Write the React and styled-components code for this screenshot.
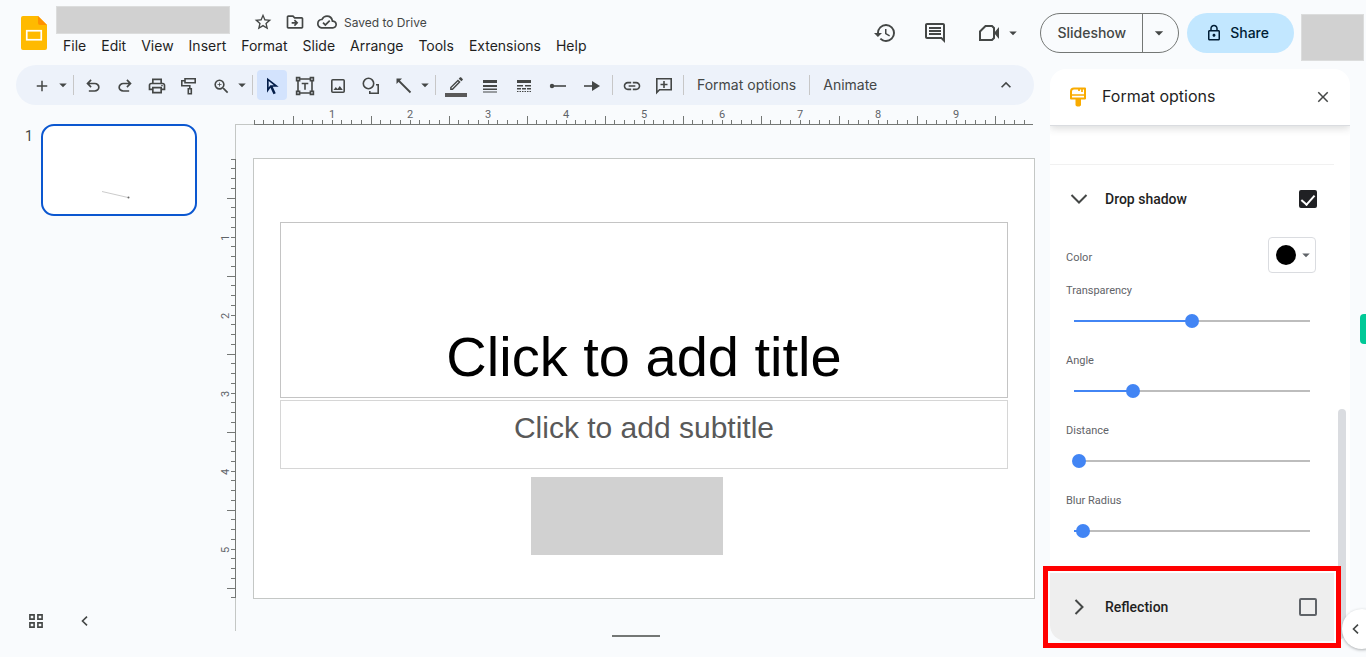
import React, { useState } from 'react';
import styled, { createGlobalStyle, css } from 'styled-components';
import {
  MdAdd,
  MdArrowDropDown,
  MdClose,
  MdHistory,
  MdKeyboardArrowUp,
  MdLink,
  MdOutlineCloudDone,
  MdOutlineDriveFileMove,
  MdOutlineEdit,
  MdOutlineInsertComment,
  MdOutlineLock,
  MdOutlinePrint,
  MdStarBorder,
  MdZoomIn
} from 'react-icons/md';

const INCH = 78;
const STEPS = 8;

const menus = [
  'File',
  'Edit',
  'View',
  'Insert',
  'Format',
  'Slide',
  'Arrange',
  'Tools',
  'Extensions',
  'Help'
];

const shadowSliders = [
  { id: 'transparency', label: 'Transparency', value: 50 },
  { id: 'angle', label: 'Angle', value: 25 },
  { id: 'distance', label: 'Distance', value: 2 },
  { id: 'blur', label: 'Blur Radius', value: 4 }
];

const SlidesLogo = () => (
  <svg width="26" height="34" viewBox="0 0 26 34" aria-hidden="true">
    <path d="M2 0h15l9 9v23a2 2 0 0 1-2 2H2a2 2 0 0 1-2-2V2a2 2 0 0 1 2-2z" fill="#ffba00" />
    <path d="M17 0l9 9h-7a2 2 0 0 1-2-2z" fill="#ff9100" />
    <rect x="5.75" y="14.75" width="14.5" height="9" fill="none" stroke="#fff" strokeWidth="1.7" />
  </svg>
);

const Symbol = ({ d, size = 20 }) => (
  <svg width={size} height={size} viewBox="0 -960 960 960" fill="currentColor" aria-hidden="true">
    <path d={d} />
  </svg>
);

const Drawn = ({ children, size = 20 }) => (
  <svg
    width={size}
    height={size}
    viewBox={`0 0 ${size} ${size}`}
    fill="none"
    stroke="currentColor"
    strokeWidth="1.6"
    aria-hidden="true"
  >
    {children}
  </svg>
);

const UndoIcon = () => (
  <Symbol d="M280-200v-80h284q63 0 109.500-40T720-420q0-60-46.500-100T564-560H312l104 104-56 56-200-200 200-200 56 56-104 104h252q97 0 169.500 63T800-420q0 94-72.500 157T564-200H280Z" />
);

const RedoIcon = () => (
  <Symbol d="M396-200q-97 0-169.500-63T160-420q0-94 72.500-157T396-640h252L544-744l56-56 200 200-200 200-56-56 104-104H396q-63 0-109.500 40T240-420q0 60 46.500 100T396-280h284v80H396Z" />
);

const SelectIcon = () => (
  <Symbol d="m320-410 79-110h170L320-716v306ZM551-80 406-392 240-160v-720l560 440H516l144 309-109 51ZM399-520Z" />
);

const PaintIcon = () => (
  <Drawn>
    <path d="M6 2.800h10.200v4H6zM6 4.800H2.800v5h8v3" />
    <path d="M9.300 12.800h3v5h-3z" />
  </Drawn>
);

const TextBoxIcon = () => (
  <Drawn>
    <path d="M4.500 3h11M4.500 17h11M3 4.500v11M17 4.500v11" />
    <path d="M1.600 1.600h3v3h-3zM15.400 1.600h3v3h-3zM1.600 15.400h3v3h-3zM15.400 15.400h3v3h-3z" />
    <path d="M6.700 7.500h6.600M10 7.500v6.300" />
  </Drawn>
);

const ImageIcon = () => (
  <Drawn>
    <rect x="3.800" y="3.800" width="12.400" height="12.400" rx="1" />
    <path d="M5.500 14l2.300-3 1.700 2 2.300-3 3 4z" fill="currentColor" stroke="none" />
  </Drawn>
);

const ShapeIcon = () => (
  <Drawn>
    <circle cx="7.500" cy="7.500" r="5.200" />
    <path d="M15 8.800h2.200v8.400H8.800V15" />
  </Drawn>
);

const LineIcon = () => (
  <Drawn>
    <path d="M4 4l12.500 12.500" strokeWidth="1.800" />
    <path d="M2.500 2.500h5.500l-5.500 5.500z" fill="currentColor" stroke="none" />
  </Drawn>
);

const WeightIcon = () => (
  <Drawn>
    <path
      d="M3 4h14v3H3zM3 9h14v2H3zM3 12.500h14v1.500H3zM3 15.500h14v1H3z"
      fill="currentColor"
      stroke="none"
    />
  </Drawn>
);

const DashIcon = () => (
  <Drawn>
    <path
      d="M3 4h14v3H3zM3 9h6v1.500H3zM11 9h6v1.500h-6zM3 12h4v1.500H3zM8 12h4v1.500H8zM13 12h4v1.500h-4z"
      fill="currentColor"
      stroke="none"
    />
    <path d="M3 15.500h14" strokeWidth="1" strokeDasharray="1.500 1" />
  </Drawn>
);

const LineStartIcon = () => (
  <Drawn>
    <path d="M4 10h14" />
    <circle cx="4" cy="10" r="2.200" fill="currentColor" stroke="none" />
  </Drawn>
);

const LineEndIcon = () => (
  <Drawn>
    <path d="M2 10h9" />
    <path d="M10 5l8 5-8 5z" fill="currentColor" stroke="none" />
  </Drawn>
);

const AddCommentIcon = () => (
  <Drawn>
    <path d="M2.800 2.800h14.400v11H5.500l-2.700 2.700zM10 5v7M6.500 8.500h7" />
  </Drawn>
);

const MeetIcon = () => (
  <Drawn size={24}>
    <path d="M8.500 5H15l2 2v10l-2 2H3v-8.500z" strokeWidth="2" />
    <path d="M17 12l5-6v12z" fill="currentColor" stroke="none" />
  </Drawn>
);

const BrushIcon = () => (
  <svg width="18" height="20" viewBox="0 0 18 20" aria-hidden="true">
    <path d="M5 1.500h11v10H2v-7q0-3 3-3z" fill="none" stroke="#f9ab00" strokeWidth="2" strokeLinejoin="round" />
    <path d="M2 8h14M13 1.500v3.500M10 1.500v2.500" stroke="#f9ab00" strokeWidth="1.700" />
    <path d="M6.500 12h5.500v5.500q0 2-2.750 2t-2.750-2z" fill="#f9ab00" />
  </svg>
);

const GridIcon = () => (
  <Drawn size={14}>
    <path d="M.9.900h4.200v4.200H.9zM8.900.900h4.200v4.200H8.900zM.9 8.900h4.200v4.200H.9zM8.900 8.900h4.200v4.200H8.900z" />
  </Drawn>
);

const ChevronIcon = () => (
  <svg width="7" height="10" viewBox="0 0 7 10" fill="none" stroke="currentColor" strokeWidth="1.600" aria-hidden="true">
    <path d="M6 .700L1.500 5 6 9.300" />
  </svg>
);

const ExpandIcon = ({ open }) => (
  <svg width="18" height="18" viewBox="0 0 18 18" fill="none" stroke="#444746" strokeWidth="2" aria-hidden="true">
    <path d={open ? 'M1.500 5L9 12.500 16.500 5' : 'M5.500 2l7 7-7 7'} />
  </svg>
);

const HorizontalRuler = () => (
  <StHorizontalRuler aria-hidden="true">
    <path d="M0 19.500h18" stroke="#c4c7c5" />
    <path d="M18 19.500h779" stroke="#747775" />
    {Array.from({ length: 10 * STEPS }, (_, i) => {
      const x = Math.floor(18 + i * INCH / STEPS);
      const height = i % STEPS === 4 ? 8 : 4;
      return <rect key={i} x={x} y={19 - height} width="1" height={height} fill="#747775" />;
    })}
    {[1, 2, 3, 4, 5, 6, 7, 8, 9].map(n => (
      <text key={n} x={18 + n * INCH} y="13" textAnchor="middle">
        {n}
      </text>
    ))}
  </StHorizontalRuler>
);

const VerticalRuler = () => (
  <StVerticalRuler aria-hidden="true">
    <path d="M19.500 0v507" stroke="#c4c7c5" />
    <path d="M19.500 35v439" stroke="#747775" />
    {Array.from({ length: 46 }, (_, i) => {
      const y = Math.floor(35 + i * INCH / STEPS);
      const width = i % STEPS === 4 ? 8 : 4;
      return <rect key={i} x={19 - width} y={y} width={width} height="1" fill="#747775" />;
    })}
    {[1, 2, 3, 4, 5].map(n => (
      <text key={n} transform={`translate(13 ${36 + n * INCH}) rotate(-90)`} textAnchor="middle">
        {n}
      </text>
    ))}
  </StVerticalRuler>
);

const Slider = ({ id, label, value: initial }) => {
  const [value, setValue] = useState(initial);
  return (
    <StSliderRow>
      <StFieldLabel htmlFor={id}>{label}</StFieldLabel>
      <StRange
        id={id}
        type="range"
        min="0"
        max="100"
        value={value}
        $value={value}
        onChange={e => setValue(Number(e.target.value))}
      />
    </StSliderRow>
  );
};

const Header = () => (
  <StHeader>
    <StLogo href="#" aria-label="Slides home">
      <SlidesLogo />
    </StLogo>
    <StDocument>
      <StTitleRow>
        <StDocumentName />
        <StTitleButton aria-label="Star">
          <MdStarBorder size={20} />
        </StTitleButton>
        <StTitleButton aria-label="Move">
          <MdOutlineDriveFileMove size={20} />
        </StTitleButton>
        <StTitleButton aria-label="Document status">
          <MdOutlineCloudDone size={20} />
        </StTitleButton>
        <StSaved>Saved to Drive</StSaved>
      </StTitleRow>
      <StMenuBar>
        {menus.map(menu => <StMenu key={menu}>{menu}</StMenu>)}
      </StMenuBar>
    </StDocument>
    <StActions>
      <StHeaderButton aria-label="Version history">
        <MdHistory size={24} />
      </StHeaderButton>
      <StHeaderButton aria-label="Comments">
        <MdOutlineInsertComment size={24} />
      </StHeaderButton>
      <StHeaderButton $wide aria-label="Join a call">
        <MeetIcon />
        <MdArrowDropDown size={18} />
      </StHeaderButton>
      <StSplit>
        <StSlideshow>Slideshow</StSlideshow>
        <StSplitArrow aria-label="Slideshow options">
          <MdArrowDropDown size={20} />
        </StSplitArrow>
      </StSplit>
      <StShare>
        <MdOutlineLock size={18} />
        Share
      </StShare>
      <StAccount />
    </StActions>
  </StHeader>
);

const Toolbar = () => (
  <StToolbar>
    <StGroup>
      <StTool aria-label="New slide"><MdAdd size={18} /></StTool>
    </StGroup>
    <StCaret aria-label="New slide with layout"><MdArrowDropDown size={18} /></StCaret>
    <StSeparator />
    <StGroup $gap={2}>
      <StTool aria-label="Undo"><UndoIcon /></StTool>
      <StTool aria-label="Redo"><RedoIcon /></StTool>
      <StTool aria-label="Print"><MdOutlinePrint size={20} /></StTool>
      <StTool aria-label="Paint format"><PaintIcon /></StTool>
      <StTool aria-label="Zoom"><MdZoomIn size={19} /></StTool>
    </StGroup>
    <StCaret aria-label="Zoom options"><MdArrowDropDown size={18} /></StCaret>
    <StSeparator />
    <StGroup $gap={3}>
      <StTool $active aria-label="Select"><SelectIcon /></StTool>
      <StTool aria-label="Text box"><TextBoxIcon /></StTool>
      <StTool aria-label="Insert image"><ImageIcon /></StTool>
      <StTool aria-label="Shape"><ShapeIcon /></StTool>
      <StTool aria-label="Line"><LineIcon /></StTool>
    </StGroup>
    <StCaret aria-label="Line options"><MdArrowDropDown size={18} /></StCaret>
    <StSeparator />
    <StGroup $gap={4} $pad={1}>
      <StTool $underline aria-label="Line color"><MdOutlineEdit size={17} /></StTool>
      <StTool aria-label="Line weight"><WeightIcon /></StTool>
      <StTool aria-label="Line dash"><DashIcon /></StTool>
      <StTool aria-label="Line start"><LineStartIcon /></StTool>
      <StTool aria-label="Line end"><LineEndIcon /></StTool>
    </StGroup>
    <StSeparator />
    <StGroup $gap={2}>
      <StTool aria-label="Insert link"><MdLink size={20} /></StTool>
      <StTool aria-label="Add comment"><AddCommentIcon /></StTool>
    </StGroup>
    <StSeparator />
    <StTextTool>Format options</StTextTool>
    <StSeparator />
    <StTextTool>Animate</StTextTool>
    <StCollapse aria-label="Hide the menus"><MdKeyboardArrowUp size={20} /></StCollapse>
  </StToolbar>
);

const Filmstrip = () => (
  <StFilmstrip>
    <StThumbRow>
      <StThumbNumber>1</StThumbNumber>
      <StThumb aria-label="Slide 1">
        <svg width="30" height="10" viewBox="0 0 30 10" aria-hidden="true">
          <path d="M1 1.500l26 6" stroke="#ccc" />
          <circle cx="27.500" cy="7.500" r="1" fill="#666" />
        </svg>
      </StThumb>
    </StThumbRow>
    <StViewButtons>
      <StPlainButton aria-label="Grid view"><GridIcon /></StPlainButton>
      <StPlainButton aria-label="Hide filmstrip"><ChevronIcon /></StPlainButton>
    </StViewButtons>
  </StFilmstrip>
);

const FormatPanel = () => {
  const [shadow, setShadow] = useState(true);
  const [reflection, setReflection] = useState(false);
  return (
    <StPanelArea>
      <StPanel>
        <StPanelHeader>
          <BrushIcon />
          <StPanelTitle>Format options</StPanelTitle>
          <StPlainButton aria-label="Close"><MdClose size={18} /></StPlainButton>
        </StPanelHeader>
        <StPanelBody>
          <StSections>
            <StPreviousSection />
            <StSection>
              <StSectionHeader>
                <StPlainButton aria-label="Collapse"><ExpandIcon open /></StPlainButton>
                <StSectionLabel htmlFor="shadow">Drop shadow</StSectionLabel>
                <StCheckbox
                  id="shadow"
                  type="checkbox"
                  checked={shadow}
                  onChange={e => setShadow(e.target.checked)}
                />
              </StSectionHeader>
              <StColorRow>
                <StFieldLabel htmlFor="color">Color</StFieldLabel>
                <StColorButton id="color">
                  <StSwatch />
                  <MdArrowDropDown size={18} />
                </StColorButton>
              </StColorRow>
              {shadowSliders.map(slider => <Slider key={slider.id} {...slider} />)}
            </StSection>
            <StReflection>
              <StPlainButton aria-label="Expand"><ExpandIcon /></StPlainButton>
              <StSectionLabel htmlFor="reflection">Reflection</StSectionLabel>
              <StCheckbox
                id="reflection"
                type="checkbox"
                checked={reflection}
                onChange={e => setReflection(e.target.checked)}
              />
            </StReflection>
          </StSections>
          <StGutter>
            <StScrollThumb />
          </StGutter>
        </StPanelBody>
      </StPanel>
      <StHighlight />
    </StPanelArea>
  );
};

const App = () => (
  <StPage>
    <GlobalStyle />
    <Header />
    <StWorkspace>
      <StEditor>
        <Toolbar />
        <StEditorBody>
          <Filmstrip />
          <StCanvas>
            <HorizontalRuler />
            <VerticalRuler />
            <StStage>
              <StSlide>
                <StTitleBox>Click to add title</StTitleBox>
                <StSubtitleBox>Click to add subtitle</StSubtitleBox>
                <StBlock />
              </StSlide>
              <StNotesHandle />
            </StStage>
          </StCanvas>
        </StEditorBody>
      </StEditor>
      <FormatPanel />
    </StWorkspace>
    <StSideTab aria-label="Open extension" />
    <StSidePanelButton aria-label="Show side panel">
      <ChevronIcon />
    </StSidePanelButton>
  </StPage>
);

const GlobalStyle = createGlobalStyle`
  * {
    box-sizing:border-box;
  }
  body {
    margin:0;
    background:#f9fbfd;
    font-family:Roboto, "Liberation Sans", sans-serif;
    color:#1f1f1f;
  }
  button {
    margin:0;
    padding:0;
    border:0;
    background:none;
    font:inherit;
    color:inherit;
    cursor:pointer;
  }
  svg {
    display:block;
    flex:none;
  }
`;

const uiFont = css`
  font-family:Inter, Roboto, sans-serif;
`;

const StPage = styled.div`
  position:relative;
  min-height:100vh;
  display:flex;
  flex-direction:column;
  overflow:hidden;
`;
const StHeader = styled.header`
  height:65px;
  display:flex;
  padding:0 2px 0 21px;
`;
const StLogo = styled.a`
  margin:16px 6px 0 0;
`;
const StDocument = styled.div`
  display:flex;
  flex-direction:column;
`;
const StTitleRow = styled.div`
  display:flex;
  align-items:center;
  gap:12px;
  padding:6px 0 0 3px;
  color:#444746;
`;
const StDocumentName = styled.div`
  width:174px;
  height:28px;
  margin-right:11px;
  background:#d1d1d1;
  border:1px solid #dcdddd;
`;
const StTitleButton = styled.button`
  padding-top:3px;
`;
const StSaved = styled.span`
  ${uiFont}
  padding-top:5px;
  margin-left:-5px;
  font-size:12px;
  line-height:16px;
`;
const StMenuBar = styled.nav`
  ${uiFont}
  display:flex;
  padding:2px 0 0 3px;
`;
const StMenu = styled.button`
  padding:0 8px 0 7px;
  font-size:14px;
  line-height:20px;
`;
const StActions = styled.div`
  display:flex;
  align-items:center;
  margin-left:auto;
  color:#444746;
`;
const StHeaderButton = styled.button`
  display:flex;
  align-items:center;
  gap:3px;
  margin:${props => (props.$wide ? '0 18px 0 4px' : '0 26px 0 0')};
`;
const StSplit = styled.div`
  ${uiFont}
  display:flex;
  height:40px;
  margin-right:8px;
  border:1px solid #747775;
  border-radius:20px;
`;
const StSlideshow = styled.button`
  padding:0 16px;
  font-size:14px;
  font-weight:500;
`;
const StSplitArrow = styled.button`
  width:36px;
  padding:0 0 0 6px;
  border-left:1px solid #747775;
`;
const StShare = styled.button`
  ${uiFont}
  display:flex;
  align-items:center;
  gap:7px;
  height:40px;
  padding:0 25px 0 18px;
  border-radius:20px;
  background:#c2e7ff;
  color:#001d35;
  font-size:14px;
  font-weight:500;
`;
const StAccount = styled.div`
  width:63px;
  height:47px;
  margin:10px 0 0 7px;
  background:#d1d1d1;
  border:1px solid #dcdddd;
`;

const StWorkspace = styled.div`
  flex:1;
  display:grid;
  grid-template-columns:minmax(0, 1fr) 300px;
  padding-right:16px;
`;
const StEditor = styled.main`
  display:flex;
  flex-direction:column;
`;
const StToolbar = styled.div`
  display:flex;
  align-items:center;
  height:40px;
  margin:0 16px;
  padding:0 18px 0 11px;
  border-radius:20px;
  background:#edf2fa;
  color:#444746;
`;
const StGroup = styled.div`
  display:flex;
  gap:${props => props.$gap || 0}px;
  padding:0 ${props => props.$pad || 0}px;
`;
const StTool = styled.button`
  display:flex;
  flex-direction:column;
  align-items:center;
  justify-content:center;
  width:30px;
  height:30px;
  padding-top:2px;
  border-radius:4px;
  ${props => props.$active && css`
    background:#d3e3fd;
    color:#041e49;
  `}
  ${props => props.$underline && css`
    &::after {
      content:'';
      width:22px;
      height:4px;
      margin-top:1px;
      background:#595959;
    }
  `}
`;
const StCaret = styled.button`
  display:flex;
  justify-content:center;
  width:12px;
`;
const StSeparator = styled.span`
  width:1px;
  height:20px;
  margin:0 4px;
  background:#c7c7c7;
`;
const StTextTool = styled.button`
  ${uiFont}
  padding:0 9px;
  font-size:14px;
  line-height:20px;
`;
const StCollapse = styled.button`
  margin-left:auto;
`;
const StEditorBody = styled.div`
  flex:1;
  display:grid;
  grid-template-columns:216px minmax(0, 1fr);
`;
const StFilmstrip = styled.aside`
  display:flex;
  flex-direction:column;
  justify-content:space-between;
  padding:19px 19px 26px 24px;
`;
const StThumbRow = styled.div`
  display:flex;
`;
const StThumbNumber = styled.span`
  width:17px;
  padding:2px 0 0 1px;
  color:#444746;
  font-size:14px;
  line-height:20px;
`;
const StThumb = styled.button`
  display:flex;
  align-items:flex-start;
  width:156px;
  height:92px;
  padding:64px 0 0 58px;
  border:2px solid #0b57d0;
  border-radius:13px;
  background:#fff;
`;
const StViewButtons = styled.div`
  display:flex;
  align-items:center;
  gap:38px;
  padding-left:5px;
  height:20px;
`;
const StPlainButton = styled.button`
  flex:none;
  color:#444746;
`;
const StCanvas = styled.div`
  display:grid;
  grid-template-columns:20px minmax(0, 1fr);
  grid-template-rows:19px 1fr;
`;
const StHorizontalRuler = styled.svg`
  grid-column:2;
  width:798px;
  height:20px;
  font-size:11px;
  fill:#5f6368;
`;
const StVerticalRuler = styled.svg`
  grid-column:1;
  grid-row:2;
  width:20px;
  height:507px;
  font-size:11px;
  fill:#5f6368;
`;
const StStage = styled.div`
  grid-column:2;
  grid-row:2;
  display:flex;
  flex-direction:column;
  padding:34px 15px 0 0;
`;
const StSlide = styled.section`
  display:flex;
  flex-direction:column;
  aspect-ratio:782 / 441;
  margin-left:17px;
  padding:63px 26px 0;
  border:1px solid #c4c7c5;
  background:#fff;
  font-family:"Liberation Sans", Arial, sans-serif;
  text-align:center;
`;
const StTitleBox = styled.div`
  display:flex;
  align-items:flex-end;
  justify-content:center;
  height:176px;
  padding-bottom:8px;
  border:1px solid #c4c4c4;
  color:#000;
  font-size:56px;
  line-height:64px;
`;
const StSubtitleBox = styled.div`
  height:69px;
  margin-top:2px;
  padding-top:9px;
  border:1px solid #d6d6d6;
  color:#595959;
  font-size:30px;
  line-height:36px;
`;
const StBlock = styled.div`
  width:192px;
  height:78px;
  margin:8px 0 0 251px;
  background:#d1d1d1;
`;
const StNotesHandle = styled.div`
  width:48px;
  height:2px;
  margin:36px auto 0;
  background:#747775;
`;

const StPanelArea = styled.aside`
  position:relative;
  padding-top:4px;
`;
const StPanel = styled.div`
  border-radius:16px;
  background:#fff;
  overflow:hidden;
`;
const StPanelHeader = styled.div`
  position:relative;
  display:flex;
  align-items:center;
  height:57px;
  padding:0 18px 0 19px;
  border-bottom:1px solid #dadce0;
  box-shadow:0 2px 8px rgba(60, 64, 67, 0.2);
`;
const StPanelTitle = styled.h2`
  ${uiFont}
  flex:1;
  margin:0 0 2px 15px;
  font-size:16px;
  font-weight:400;
  line-height:24px;
`;
const StPanelBody = styled.div`
  display:flex;
`;
const StSections = styled.div`
  flex:1;
`;
const StPreviousSection = styled.div`
  height:39px;
  border-bottom:1px solid #f1f1f1;
`;
const StSection = styled.section`
  padding-bottom:20px;
`;
const StSectionHeader = styled.div`
  display:flex;
  align-items:center;
  height:72px;
  padding:0 17px 4px 20px;
`;
const StReflection = styled.div`
  display:flex;
  align-items:center;
  height:68px;
  padding:0 17px 0 20px;
  background:#eee;
`;
const StSectionLabel = styled.label`
  flex:1;
  margin-left:17px;
  font-size:14px;
  font-weight:500;
  line-height:20px;
`;
const StCheckbox = styled.input`
  appearance:none;
  display:flex;
  justify-content:center;
  width:18px;
  height:18px;
  margin:0;
  border:2px solid #5f6368;
  border-radius:2px;
  &:checked {
    border-color:#202124;
    background:#202124;
  }
  &:checked::after {
    content:'';
    width:6px;
    height:11px;
    border:solid #fff;
    border-width:0 2px 2px 0;
    transform:rotate(42deg);
  }
`;
const StColorRow = styled.div`
  display:flex;
  align-items:flex-end;
  justify-content:space-between;
  height:36px;
  padding:0 18px 0 16px;
`;
const StColorButton = styled.button`
  display:flex;
  align-items:center;
  gap:1px;
  width:48px;
  height:36px;
  padding-left:7px;
  border:1px solid #dadce0;
  border-radius:4px;
  color:#5f6368;
`;
const StSwatch = styled.span`
  width:20px;
  height:20px;
  border-radius:50%;
  background:#000;
`;
const StFieldLabel = styled.label`
  padding-bottom:7px;
  color:#5f6368;
  font-size:11px;
  line-height:16px;
`;
const StSliderRow = styled.div`
  display:flex;
  flex-direction:column;
  gap:5px;
  height:70px;
  padding:10px 17px 0 16px;
`;
const StRange = styled.input`
  appearance:none;
  height:20px;
  margin:0 0 0 1px;
  background:linear-gradient(
    to right,
    #4285f4 ${props => props.$value}%,
    #bdbdbd ${props => props.$value}%
  ) center / calc(100% - 14px) 2px no-repeat;
  &::-webkit-slider-thumb {
    appearance:none;
    width:14px;
    height:14px;
    border-radius:50%;
    background:#4285f4;
  }
`;
const StGutter = styled.div`
  display:flex;
  align-items:flex-end;
  width:16px;
  padding-left:4px;
`;
const StScrollThumb = styled.div`
  width:8px;
  height:45%;
  border-radius:4px 4px 0 0;
  background:#dadce0;
`;
const StHighlight = styled.div`
  position:absolute;
  top:501px;
  left:-7px;
  right:9px;
  height:82px;
  border:5px solid #f00;
  pointer-events:none;
`;
const StSideTab = styled.button`
  position:absolute;
  top:314px;
  right:0;
  width:6px;
  height:30px;
  border-radius:4px 0 0 4px;
  background:#00c997;
`;
const StSidePanelButton = styled.button`
  position:absolute;
  right:-16px;
  bottom:8px;
  width:40px;
  height:40px;
  padding-left:10px;
  border-radius:50%;
  background:#fff;
  color:#444746;
  box-shadow:0 1px 3px rgba(60, 64, 67, 0.4);
`;

export default App;
